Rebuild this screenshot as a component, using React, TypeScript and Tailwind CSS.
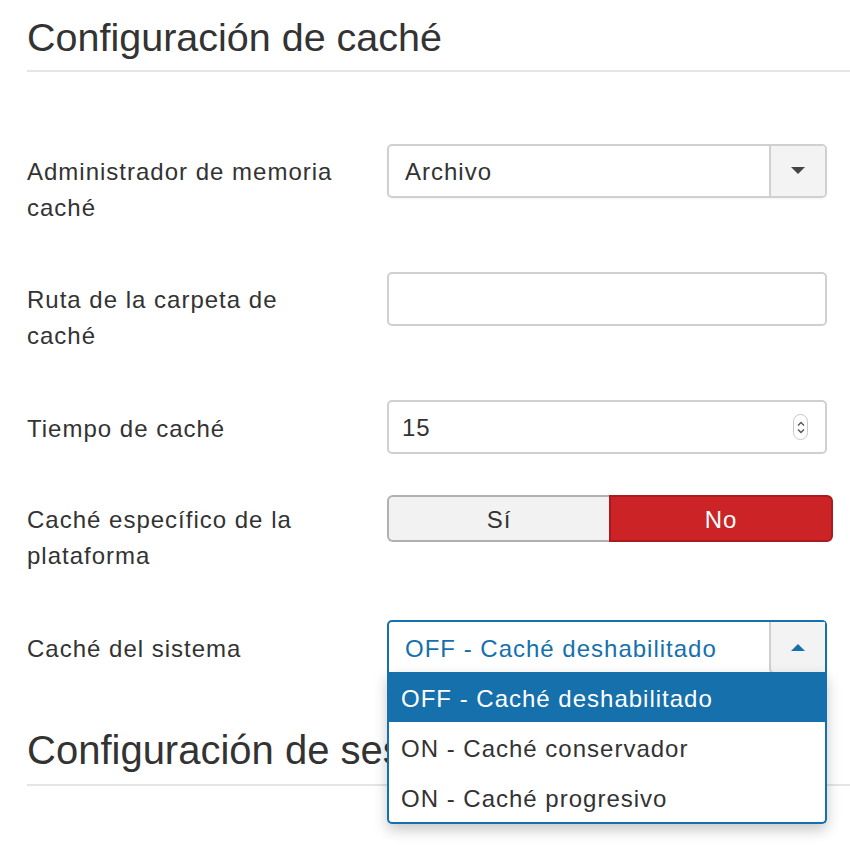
import React from 'react';

const font = { fontFamily: '"Liberation Sans", Arial, sans-serif' };

function Caret({ up = false, color = '#444' }: { up?: boolean; color?: string }) {
  return (
    <svg width="14" height="8" viewBox="0 0 14 8">
      {up ? <path d="M0 8 L7 1 L14 8 Z" fill={color} /> : <path d="M0 0 L14 0 L7 7 Z" fill={color} />}
    </svg>
  );
}

function Spinner() {
  return (
    <div className="w-[15px] h-[26px] rounded-full border border-[#c8c8c8] bg-white flex flex-col items-center justify-center gap-[3px]">
      <svg width="8" height="5" viewBox="0 0 8 5">
        <path d="M1 4.5 L4 1.5 L7 4.5" stroke="#555" strokeWidth="1.4" fill="none" />
      </svg>
      <svg width="8" height="5" viewBox="0 0 8 5">
        <path d="M1 0.5 L4 3.5 L7 0.5" stroke="#555" strokeWidth="1.4" fill="none" />
      </svg>
    </div>
  );
}

export default function App() {
  const options = ['OFF - Caché deshabilitado', 'ON - Caché conservador', 'ON - Caché progresivo'];

  return (
    <div className="w-[850px] h-[848px] bg-white overflow-hidden text-[#333]" style={font}>
      <div className="pl-[27px]">
        {/* Section title */}
        <h2 className="text-[39.5px] leading-[44px] pt-[15px] pb-[11px] border-b-2 border-[#e5e5e5]">
          Configuración de caché
        </h2>

        <div className="pt-[72px] text-[24px] tracking-[1px]">
          {/* Administrador */}
          <div className="flex items-start mb-[46px]">
            <label className="w-[360px] pt-[10px] leading-[36px]">
              Administrador de memoria
              <br />
              caché
            </label>
            <div className="w-[440px] h-[54px] flex rounded-[5px] border-2 border-[#d0d0d0] overflow-hidden shadow-[0_1px_2px_rgba(0,0,0,0.05)]">
              <div className="flex-1 flex items-center pl-[16px] pt-[2px]">Archivo</div>
              <div className="w-[56px] bg-[#f3f3f3] border-l-2 border-[#d0d0d0] flex items-center justify-center">
                <Caret />
              </div>
            </div>
          </div>

          {/* Ruta */}
          <div className="flex items-start mb-[46px]">
            <label className="w-[360px] pt-[10px] leading-[36px]">
              Ruta de la carpeta de
              <br />
              caché
            </label>
            <div className="w-[440px] h-[54px] rounded-[5px] border-2 border-[#d0d0d0] bg-white" />
          </div>

          {/* Tiempo */}
          <div className="flex items-start mb-[41px]">
            <label className="w-[360px] pt-[11px] leading-[36px]">Tiempo de caché</label>
            <div className="w-[440px] h-[54px] rounded-[5px] border-2 border-[#d0d0d0] bg-white flex items-center justify-between pl-[13px] pr-[17px]">
              <span className="pt-[2px]">15</span>
              <Spinner />
            </div>
          </div>

          {/* Plataforma */}
          <div className="flex items-start mb-[46px]">
            <label className="w-[360px] pt-[7px] leading-[36px]">
              Caché específico de la
              <br />
              plataforma
            </label>
            <div className="w-[446px] h-[47px] flex">
              <div className="w-[222px] flex items-center justify-center pt-[2px] bg-[#f2f2f2] border-2 border-r-0 border-[#b0b0b0] rounded-l-[6px]">
                Sí
              </div>
              <div className="flex-1 flex items-center justify-center pt-[2px] bg-[#cb2326] border-2 border-[#a91b1f] rounded-r-[6px] text-white">
                No
              </div>
            </div>
          </div>

          {/* Sistema */}
          <div className="flex items-start">
            <label className="w-[360px] pt-[11px] leading-[36px]">Caché del sistema</label>
            <div className="relative w-[440px]">
              <div className="h-[54px] flex rounded-t-[5px] border-2 border-b-0 border-[#1670ac] bg-white">
                <div className="flex-1 flex items-center pl-[16px] pt-[2px] text-[#1670ac]">{options[0]}</div>
                <div className="w-[56px] bg-[#f3f3f3] border-l-2 border-b-2 border-[#d0d0d0] rounded-bl-[5px] flex items-center justify-center">
                  <Caret up color="#1670ac" />
                </div>
              </div>
              <div className="absolute left-0 right-0 top-[52px] bg-white border-2 border-t-0 border-[#1670ac] rounded-b-[5px] shadow-[0_6px_14px_rgba(0,0,0,0.22)] z-10">
                {options.map((o, i) => (
                  <div
                    key={o}
                    className={
                      i === 0
                        ? 'h-[50px] flex items-center pl-[12px] pt-[3px] bg-[#1670ac] text-white'
                        : 'h-[50px] flex items-center pl-[12px] pt-[3px] text-[#333]'
                    }
                  >
                    {o}
                  </div>
                ))}
              </div>
            </div>
          </div>

          {/* Next section */}
          <h2 className="mt-[53px] text-[40px] tracking-normal leading-[46px] pb-[11px] border-b-2 border-[#e5e5e5] whitespace-nowrap">
            Configuración de sesión
          </h2>
        </div>
      </div>
    </div>
  );
}
